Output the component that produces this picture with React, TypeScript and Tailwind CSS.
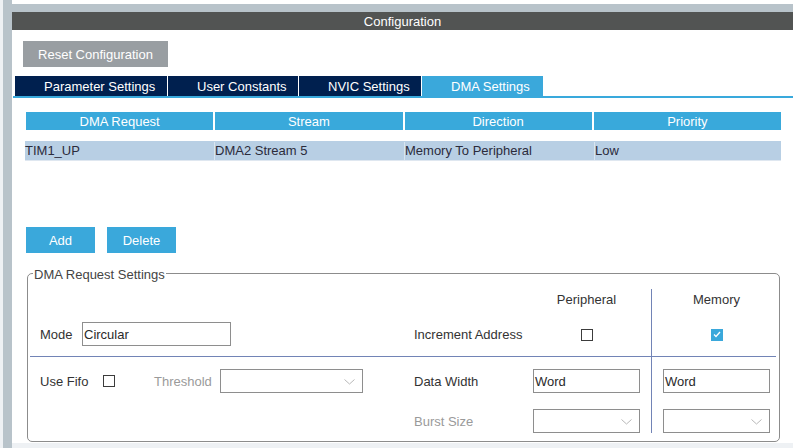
import type { ReactNode } from 'react';

const font = { fontFamily: '"Liberation Sans", Arial, sans-serif' };

function Chevron() {
    return (
        <svg width="11" height="6" viewBox="0 0 11 6" className="shrink-0">
            <polyline points="0.5,0.5 5.5,5 10.5,0.5" fill="none" stroke="#b8b8b8" strokeWidth="1" />
        </svg>
    );
}

function Select({ width }: { width: string }) {
    return (
        <div className={`${width} flex h-[24px] items-center justify-end border border-[#8e8e8e] bg-white pr-[7px] pt-[1px]`}>
            <Chevron />
        </div>
    );
}

function TextBox({ width, value }: { width: string; value: string }) {
    return (
        <div className={`${width} flex h-[24px] items-center border border-[#8e8e8e] bg-white pl-[1px] pt-[2px] text-[13px] text-[#2a2a2a]`}>
            {value}
        </div>
    );
}

function Checkbox({ checked = false }: { checked?: boolean }) {
    if (checked) {
        return (
            <div className="flex h-[12px] w-[12px] items-center justify-center bg-[#3aa8db]">
                <svg width="8" height="7" viewBox="0 0 8 7">
                    <polyline points="1,3.5 3,5.5 7,1" fill="none" stroke="white" strokeWidth="1.3" />
                </svg>
            </div>
        );
    }
    return <div className="h-[12px] w-[12px] border border-[#3c3c3c] bg-white" />;
}

function Tab({ width, active = false, children }: { width: string; active?: boolean; children: ReactNode }) {
    return (
        <div
            className={`${width} flex h-[20px] items-center pl-[29px] pt-[2px] text-[13px] text-white ${
                active ? 'bg-[#3aa8db]' : 'bg-[#00204f]'
            }`}
        >
            {children}
        </div>
    );
}

function BlueButton({ children }: { children: ReactNode }) {
    return (
        <div className="flex h-[26px] w-[69px] items-center justify-center bg-[#3aa8db] pt-[2px] text-[13px] text-white">
            {children}
        </div>
    );
}

export default function App() {
    return (
        <div className="flex h-[448px] w-[793px] overflow-hidden bg-white" style={font}>
            <div className="w-[3px] bg-[#eef1f4]" />
            <div className="w-[9px] bg-[#b8c3ca]" />

            <div className="flex flex-1 flex-col">
                <div className="h-[4px] bg-white" />
                <div className="h-[8px] bg-[#b8c3ca]" />
                <div className="flex h-[18px] items-center justify-center bg-[#525453] pt-[2px] text-[13px] text-white">
                    Configuration
                </div>

                <div className="flex flex-1 flex-col">
                    <div className="ml-[11px] mt-[11px] flex h-[26px] w-[145px] items-center justify-center bg-[#999ea2] pt-[2px] text-[13px] text-white">
                        Reset Configuration
                    </div>

                    {/* tabs */}
                    <div className="ml-[3px] mt-[9px] flex gap-[1px]">
                        <Tab width="w-[152px]">Parameter Settings</Tab>
                        <Tab width="w-[130px]">User Constants</Tab>
                        <Tab width="w-[122px]">NVIC Settings</Tab>
                        <Tab width="w-[121px]" active>
                            DMA Settings
                        </Tab>
                    </div>
                    <div className="ml-[1px] h-[2px] bg-[#39a9dc]" />

                    {/* request table */}
                    <div className="ml-[14px] mt-[14px] grid w-[755px] grid-cols-4 gap-[2px]">
                        {['DMA Request', 'Stream', 'Direction', 'Priority'].map((h) => (
                            <div key={h} className="flex h-[18px] items-center justify-center bg-[#39a9db] pt-[2px] text-[13px] text-white">
                                {h}
                            </div>
                        ))}
                    </div>
                    <div className="ml-[13px] mt-[11px] flex h-[20px] w-[756px] border-b border-[#dfe7f0] bg-[#b8cfe4] pt-[1px] text-[13px] text-[#2b2b3b]">
                        <div className="flex w-[189px] items-center">TIM1_UP</div>
                        <div className="flex w-[190px] items-center border-l border-[#d9e4ef]">DMA2 Stream 5</div>
                        <div className="flex w-[190px] items-center border-l border-[#d9e4ef]">Memory To Peripheral</div>
                        <div className="flex flex-1 items-center border-l border-[#d9e4ef]">Low</div>
                    </div>

                    <div className="ml-[14px] mt-[66px] flex gap-[12px]">
                        <BlueButton>Add</BlueButton>
                        <BlueButton>Delete</BlueButton>
                    </div>

                    {/* DMA request settings group */}
                    <div className="relative ml-[15px] mt-[20px] w-[753px] rounded-[5px] border border-[#8c8c8c] pl-[12px]">
                        <span className="absolute -top-[7px] left-[5px] bg-white px-[1px] text-[13px] leading-[15px] text-[#444]">
                            DMA Request Settings
                        </span>

                        <div className="grid grid-cols-[374px_119px_107px_11px_1px_11px_107px] grid-rows-[15px_20px_13px_24px_10px_1px_12px_24px_16px_24px_8px] text-[13px] text-[#333]">
                            <div className="col-start-3 row-start-2 flex items-center justify-center pt-[2px]">Peripheral</div>
                            <div className="col-start-7 row-start-2 flex items-center justify-center pt-[2px]">Memory</div>
                            <div className="col-start-5 row-span-9 row-start-2 bg-[#7284b6]" />

                            <div className="col-start-1 row-start-4 flex items-center">
                                <span className="w-[42px] pt-[2px]">Mode</span>
                                <TextBox width="w-[149px]" value="Circular" />
                            </div>
                            <div className="col-start-2 row-start-4 flex items-center pt-[2px]">Increment Address</div>
                            <div className="col-start-3 row-start-4 flex items-center justify-center pl-[1px] pt-[1px]">
                                <Checkbox />
                            </div>
                            <div className="col-start-7 row-start-4 flex items-center justify-center pt-[1px]">
                                <Checkbox checked />
                            </div>

                            <div className="col-span-7 col-start-1 row-start-6 -ml-[10px] -mr-[6px] bg-[#7284b6]" />

                            <div className="col-start-1 row-start-8 flex items-center">
                                <span className="w-[63px] pt-[2px]">Use Fifo</span>
                                <Checkbox />
                                <span className="ml-[39px] w-[66px] pt-[2px] text-[#9a9a9a]">Threshold</span>
                                <Select width="w-[143px]" />
                            </div>
                            <div className="col-start-2 row-start-8 flex items-center pt-[2px]">Data Width</div>
                            <div className="col-start-3 row-start-8">
                                <TextBox width="w-[107px]" value="Word" />
                            </div>
                            <div className="col-start-7 row-start-8">
                                <TextBox width="w-[107px]" value="Word" />
                            </div>

                            <div className="col-start-2 row-start-10 flex items-center pt-[2px] text-[#9a9a9a]">Burst Size</div>
                            <div className="col-start-3 row-start-10">
                                <Select width="w-[107px]" />
                            </div>
                            <div className="col-start-7 row-start-10">
                                <Select width="w-[107px]" />
                            </div>
                        </div>
                    </div>
                </div>

                <div className="h-[5px] bg-[#eef1f4]" />
            </div>
        </div>
    );
}
